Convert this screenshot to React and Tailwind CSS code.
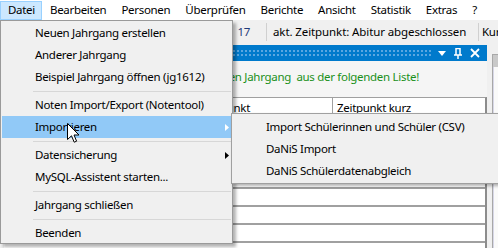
import React from 'react';

const topMenu = ['Datei', 'Bearbeiten', 'Personen', 'Überprüfen', 'Berichte', 'Ansicht', 'Statistik', 'Extras', '?'];

const dateiItems = [
  { label: 'Neuen Jahrgang erstellen' },
  { label: 'Anderer Jahrgang' },
  { label: 'Beispiel Jahrgang öffnen (jg1612)' },
  { sep: true },
  { label: 'Noten Import/Export (Notentool)' },
  { label: 'Importieren', sub: true, active: true },
  { sep: true },
  { label: 'Datensicherung', sub: true },
  { label: 'MySQL-Assistent starten...' },
  { sep: true },
  { label: 'Jahrgang schließen' },
  { sep: true },
  { label: 'Beenden' },
];

const importItems = [
  'Import Schülerinnen und Schüler (CSV)',
  'DaNiS Import',
  'DaNiS Schülerdatenabgleich',
];

const Arrow = ({ white }) => (
  <svg width="4" height="7" viewBox="0 0 4 7" className="absolute left-[223px] top-[8px]">
    <path d="M0 0 L4 3.5 L0 7 Z" fill={white ? '#ffffff' : '#000000'} />
  </svg>
);

export default function App() {
  return (
    <div className="relative w-[498px] h-[248px] overflow-hidden bg-[#f0f0f0] text-[11.5px] text-black font-['Noto_Sans',sans-serif] tracking-[-0.3px]">
      {/* Menüleiste */}
      <div className="h-[20px] bg-white flex items-center">
        {topMenu.map((m, i) => (
          <div
            key={m}
            className={`h-[19px] shrink-0 flex items-center pl-[7px] pr-[6px] leading-none whitespace-nowrap ${
              i === 0 ? 'bg-[#cce8ff] border border-[#99d1ff]' : 'border border-transparent'
            }`}
          >
            {m}
          </div>
        ))}
      </div>

      {/* Statuszeile */}
      <div className="h-[24px] flex items-center whitespace-nowrap">
        <div className="w-[266px] shrink-0 text-right pr-[16px] text-[#1f3a7a]">Jahrgang&nbsp;&nbsp;&nbsp;17</div>
        <div className="w-px shrink-0 h-[18px] bg-[#d0d0d0]" />
        <div className="w-[211px] shrink-0 pl-[6px] tracking-[-0.1px]">akt. Zeitpunkt: Abitur abgeschlossen</div>
        <div className="w-px shrink-0 h-[18px] bg-[#d0d0d0]" />
        <div className="shrink-0 pl-[3px]">Kurse</div>
      </div>

      {/* Angedocktes Fenster */}
      <div className="flex mt-px">
        <div className="w-[487px] shrink-0">
          <div className="h-[16px] bg-[#007acc] flex items-center pl-[8px]">
            <div className="flex-1 h-[8px] bg-[radial-gradient(circle,#5ea9e2_0.7px,transparent_0.9px)] bg-size-[4px_4px]" />
            <div className="flex items-center gap-[8px] pl-[6px] pr-[7px]">
              <svg width="8" height="5" viewBox="0 0 8 5"><path d="M0 0 H8 L4 5 Z" fill="#fff" /></svg>
              <svg width="8" height="11" viewBox="0 0 8 11">
                <path d="M2 0.5 H6 V7 H2 Z M0 7 H8 M4 7 V11" stroke="#fff" strokeWidth="1.5" fill="none" />
              </svg>
              <svg width="10" height="10" viewBox="0 0 10 10">
                <path d="M1 1 L9 9 M9 1 L1 9" stroke="#fff" strokeWidth="1.8" />
              </svg>
            </div>
          </div>
          <div className="h-[36px] pt-[8px] bg-[#f5f5f5]">
            <div className="leading-[16px] text-[#1a901a] pl-[129px] whitespace-nowrap">
              Bitte wählen Sie einen Jahrgang&nbsp; aus der folgenden Liste!
            </div>
          </div>
          <div className="ml-[4px] bg-white border-t border-[#a0a0a0] border-r-2 border-r-[#8c8c8c] h-[160px]">
            <div className="grid grid-cols-[190px_138px_1fr] h-[19px] leading-[19px] border-b border-[#d5d5d5]">
              <div className="pl-[4px]">Jahrgang</div>
              <div className="pl-[6px] border-l border-[#c8c8c8]">Zeitpunkt</div>
              <div className="pl-[4px] border-l border-[#a0a0a0]">Zeitpunkt kurz</div>
            </div>
            {[0, 1, 2, 3, 4, 5, 6].map((r) => (
              <div key={r} className="h-[18px] border-b-2 border-[#a0a0a0]" />
            ))}
          </div>
        </div>
        <div className="flex-1 flex">
          <div className="w-[5px]" />
          <div className="flex-1 mt-[9px] border-l border-t border-[#a8a8a8]">
            <div className="h-[12px] bg-[#c9c9c9]" />
            <div className="h-[200px] bg-[#fafafa] border-l border-[#d8d8e8]" />
          </div>
        </div>
      </div>

      {/* Menü Datei */}
      <div className="absolute left-0 top-[20px] w-[233px] h-[224px] bg-[#f0f0f0] border border-[#9a9a9a] shadow-[3px_3px_3px_rgba(0,0,0,0.3)] p-px">
        {dateiItems.map((it, i) =>
          it.sep ? (
            <div key={i} className="h-[6px] flex items-center pl-[31px]">
              <div className="w-full h-px bg-[#d7d7d7]" />
            </div>
          ) : (
            <div
              key={i}
              className={`relative h-[22px] leading-[22px] pl-[33px] ${it.active ? 'bg-[#91c9f7]' : ''}`}
            >
              {it.label}
              {it.sub && <Arrow white={it.active} />}
            </div>
          )
        )}
      </div>

      {/* Untermenü Importieren */}
      <div className="absolute left-[231px] top-[113px] w-[290px] h-[71px] bg-[#f0f0f0] border border-[#a0a0a0] shadow-[2px_2px_3px_rgba(0,0,0,0.3)] pt-[2px]">
        {importItems.map((s) => (
          <div key={s} className="h-[22px] leading-[22px] pl-[34px]">
            {s}
          </div>
        ))}
      </div>

      {/* Mauszeiger */}
      <svg width="13" height="21" viewBox="0 0 13 21" className="absolute left-[67px] top-[123px]">
        <path
          d="M0.5 0.5 L0.5 16.5 L4.5 12.8 L7.2 19.2 L9.6 18.2 L7 12 L12 12 Z"
          fill="#ffffff"
          stroke="#000000"
          strokeWidth="1"
        />
      </svg>
    </div>
  );
}
